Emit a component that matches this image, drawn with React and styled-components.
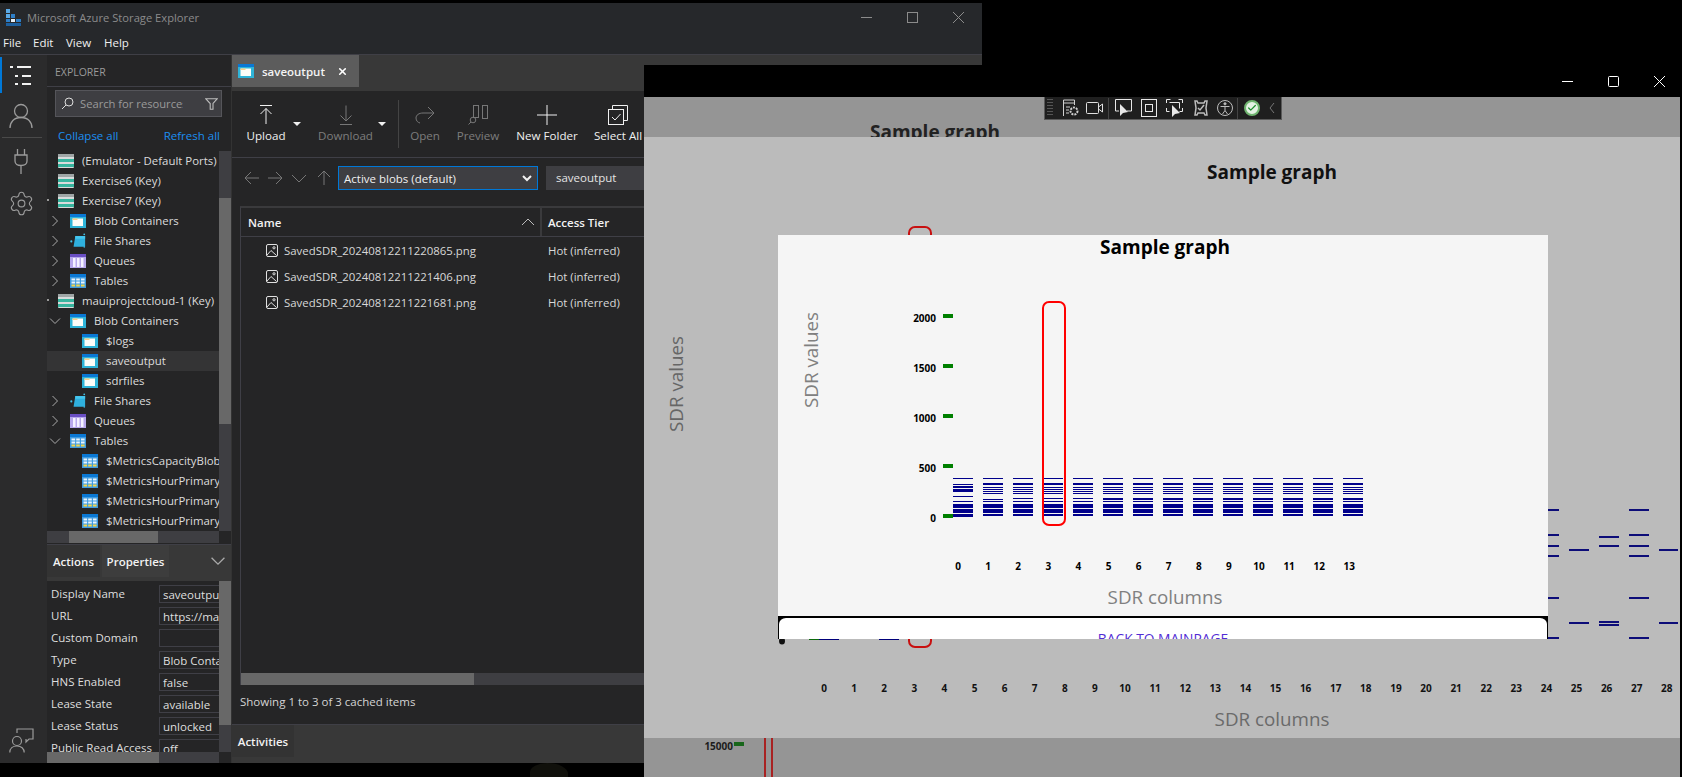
import React from 'react';
import styled, { createGlobalStyle } from 'styled-components';
import { Settings, X, Check } from 'lucide-react';

const GlobalStyle = createGlobalStyle`
  html, body { margin: 0; padding: 0; background: #000; overflow: hidden; }
  * { box-sizing: border-box; }
`;

const UI_FONT = '"Open Sans", "Noto Sans", "Liberation Sans", sans-serif';

const Desktop = styled.div`
  position: relative;
  width: 1682px;
  height: 777px;
  background: #000;
  overflow: hidden;
  font-family: ${UI_FONT};
`;

const GroundPatch = styled.div`
  position: absolute;
  left: 530px;
  top: 763px;
  width: 38px;
  height: 20px;
  border-radius: 50% 60% 0 0;
  background: #10100b;
`;

/* ---------- explorer window ---------- */
const ExplorerWindow = styled.div`
  position: absolute;
  left: 0;
  top: 3px;
  width: 982px;
  height: 760px;
  display: flex;
  flex-direction: column;
  background: #252526;
  color: #e4e4e4;
  font-size: 11.5px;
  overflow: hidden;
`;

const TitleBar = styled.div`
  height: 29px;
  flex: none;
  display: flex;
  align-items: center;
  padding-left: 6px;
  padding-right: 1px;
  background: #26282b;
  color: #8b8b8b;
  font-size: 11.2px;
`;

const TitleText = styled.span`
  margin-left: 6px;
`;

const TitleSpacer = styled.div`
  flex: 1;
`;

const WinButton = styled.div`
  width: 46px;
  height: 24px;
  display: flex;
  align-items: center;
  justify-content: center;
  color: #8b8b8b;
`;

const MenuBar = styled.div`
  height: 23px;
  flex: none;
  display: flex;
  align-items: flex-start;
  padding: 3px 0 0 3px;
  background: #26282b;
  border-bottom: 1px solid #3f3f46;
  color: #f0f0f0;
  font-size: 11.5px;
`;

const MenuItem = styled.span`
  width: ${(p) => p.$w}px;
`;

const Body = styled.div`
  flex: 1;
  display: flex;
  min-height: 0;
`;

const ActivityBar = styled.div`
  width: 47px;
  flex: none;
  display: flex;
  flex-direction: column;
  align-items: center;
  background: #2b2b2c;
  position: relative;
  padding-right: 5px;
  color: #9b9b9b;
`;

const ActivityIndicator = styled.div`
  position: absolute;
  left: 0;
  top: 2px;
  width: 2px;
  height: 36px;
  background: #0078d7;
`;

const ActivityButton = styled.div`
  height: ${(p) => p.$h}px;
  flex: none;
  display: flex;
  align-items: center;
  justify-content: center;
  color: ${(p) => p.$color || '#9b9b9b'};
`;

const ActivityDivider = styled.div`
  width: 40px;
  height: 1px;
  margin: 2px 0 0 1px;
  background: #4a4a4a;
`;

const ActivitySpacer = styled.div`
  flex: 1;
`;

const Sidebar = styled.div`
  width: 185px;
  flex: none;
  display: flex;
  flex-direction: column;
  border-right: 1px solid #333;
`;

const SideHeader = styled.div`
  height: 32px;
  flex: none;
  padding: 10px 0 0 8px;
  border-bottom: 1px solid #3f3f46;
  font-size: 10.5px;
  color: #9a9a9a;
`;

const SearchBox = styled.div`
  height: 27px;
  flex: none;
  margin: 3px 9px 0 8px;
  display: flex;
  align-items: center;
  background: #3e3e42;
  border: 1px solid #55555a;
  color: #9a9a9a;
  padding: 0 3px 0 5px;
`;

const SearchText = styled.div`
  width: 103px;
  margin-left: 6px;
  white-space: nowrap;
  overflow: hidden;
  font-size: 11.2px;
`;

const SearchFilter = styled.div`
  margin-left: auto;
  display: flex;
`;

const LinkRow = styled.div`
  height: 34px;
  flex: none;
  display: flex;
  justify-content: space-between;
  padding: 11px 11px 0 11px;
  color: #1c8ef0;
  font-size: 11.5px;
`;

const ScrollPane = styled.div`
  height: ${(p) => p.$h}px;
  flex: none;
  display: flex;
`;

const TreeList = styled.div`
  width: 172px;
  flex: none;
  overflow: hidden;
`;

const TreeRow = styled.div`
  height: 20px;
  display: flex;
  align-items: center;
  position: relative;
  padding-left: ${(p) => p.$indent}px;
  padding-bottom: 1px;
  gap: 8px;
  white-space: nowrap;
  color: #dcdcdc;
  font-size: 11.4px;
  background: ${(p) => (p.$selected ? '#343435' : 'transparent')};

  & > svg {
    flex: none;
  }
`;

const Twisty = styled.span`
  position: absolute;
  left: 1px;
  top: 3px;
  width: 14px;
  height: 14px;
  display: flex;
  color: #aaa;
`;

const AccountTick = styled.span`
  position: absolute;
  left: 0;
  top: 8px;
  width: 2px;
  height: 2px;
  background: #999;
`;

const VTrack = styled.div`
  width: 12px;
  flex: none;
  background: #3e3e42;
  overflow: hidden;
`;

const VThumb = styled.div`
  margin-top: ${(p) => p.$top}px;
  height: ${(p) => p.$size}px;
  background: #686868;
`;

const HScrollRow = styled.div`
  height: ${(p) => p.$h}px;
  flex: none;
  display: flex;
`;

const HTrack = styled.div`
  flex: ${(p) => (p.$w ? 'none' : 1)};
  width: ${(p) => (p.$w ? `${p.$w}px` : 'auto')};
  height: 100%;
  background: #3e3e42;
  display: flex;
`;

const HThumb = styled.div`
  margin-left: ${(p) => p.$left}px;
  width: ${(p) => p.$size}px;
  background: #686868;
`;

const PanelTabs = styled.div`
  height: 37px;
  flex: none;
  margin-top: 1px;
  border-top: 1px solid #3f3f46;
  background: #383838;
  display: flex;
  align-items: flex-start;
  font-weight: 600;
  color: #f2f2f2;
  font-size: 11.5px;
`;

const PanelTab = styled.div`
  width: ${(p) => p.$w}px;
  height: 32px;
  display: flex;
  align-items: center;
  justify-content: center;
  margin-right: ${(p) => p.$mr || 0}px;
  background: ${(p) => (p.$active ? '#3d3d3d' : '#333333')};
`;

const PanelChevron = styled.div`
  margin-left: auto;
  margin-right: 4px;
  height: 32px;
  display: flex;
  align-items: center;
  color: #aaa;
`;

const PropList = styled.div`
  width: 172px;
  flex: none;
  padding-top: 4px;
  overflow: hidden;
`;

const PropRow = styled.div`
  display: flex;
  align-items: center;
  height: 18px;
  margin-bottom: 4px;
  padding-left: 4px;
  white-space: nowrap;
  font-size: 11.5px;
  color: #dfdfdf;
`;

const PropLabel = styled.div`
  width: 108px;
  flex: none;
  margin-top: -2px;
`;

const PropValue = styled.div`
  width: 80px;
  height: 18px;
  flex: none;
  padding: 0 0 0 3px;
  line-height: 17px;
  border: 1px solid #3f3f46;
`;

const Main = styled.div`
  flex: 1;
  min-width: 0;
  display: flex;
  flex-direction: column;
`;

const TabBar = styled.div`
  height: 36px;
  flex: none;
  background: #383838;
`;

const DocTab = styled.div`
  width: 127px;
  height: 32px;
  display: flex;
  align-items: center;
  padding-left: 6px;
  gap: 8px;
  background: #5c5c5c;
  color: #f4f4f4;
  font-weight: 600;
  font-size: 11.5px;
`;

const TabClose = styled.span`
  display: flex;
  margin-left: auto;
  margin-right: 11px;
  color: #fff;
`;

const Toolbar = styled.div`
  height: 67px;
  flex: none;
  display: flex;
  align-items: flex-start;
  padding: 13px 0 0 8px;
  border-bottom: 1px solid #3f3f46;
  white-space: nowrap;
`;

const ToolButton = styled.div`
  width: ${(p) => p.$w}px;
  margin-left: ${(p) => p.$ml || 0}px;
  flex: none;
  display: flex;
  flex-direction: column;
  align-items: center;
  gap: 2px;
  font-size: 11.6px;
  color: ${(p) => (p.$dim ? '#7d7d7d' : '#f0f0f0')};
`;

const ToolIcon = styled.div`
  height: 22px;
  display: flex;
  align-items: center;
`;

const Caret = styled.div`
  width: 0;
  height: 0;
  flex: none;
  margin: 18px 0 0 ${(p) => p.$ml}px;
  border-left: 4px solid transparent;
  border-right: 4px solid transparent;
  border-top: 4px solid #f0f0f0;
`;

const ToolSeparator = styled.div`
  width: 1px;
  height: 48px;
  flex: none;
  margin: -4px 0 0 ${(p) => p.$ml}px;
  background: #444;
`;

const NavRow = styled.div`
  height: 48px;
  flex: none;
  display: flex;
  align-items: flex-start;
  padding: 8px 0 0 12px;
`;

const NavButton = styled.div`
  width: ${(p) => p.$w}px;
  height: 24px;
  flex: none;
  display: flex;
  align-items: center;
  color: #777;
`;

const FilterSelect = styled.div`
  width: 200px;
  height: 24px;
  flex: none;
  display: flex;
  align-items: center;
  justify-content: space-between;
  padding: 0 5px;
  background: #3e3e42;
  border: 1px solid #0078d7;
  color: #f0f0f0;
  font-size: 11.5px;
`;

const PathBox = styled.div`
  width: 300px;
  height: 24px;
  flex: none;
  margin-left: 8px;
  padding: 0 10px;
  line-height: 23px;
  background: #3e3e42;
  color: #e4e4e4;
  font-size: 11.5px;
`;

const BlobTable = styled.div`
  margin-left: 8px;
  flex: 1;
  min-height: 0;
  display: flex;
  flex-direction: column;
  border-left: 1px solid #3f3f46;
  border-top: 2px solid #3a3a3c;
`;

const TableHead = styled.div`
  height: 29px;
  flex: none;
  display: flex;
  align-items: center;
  border-bottom: 1px solid #3f3f46;
  font-weight: 600;
  font-size: 11.5px;
  color: #f2f2f2;
`;

const NameHead = styled.div`
  width: 301px;
  height: 100%;
  flex: none;
  display: flex;
  align-items: center;
  justify-content: space-between;
  padding: 0 5px 0 7px;
  border-right: 2px solid #3a3a3c;
`;

const TierHead = styled.div`
  padding-left: 6px;
`;

const TableRows = styled.div`
  flex: 1;
`;

const BlobRow = styled.div`
  height: 26px;
  display: flex;
  align-items: center;
  font-size: 11.4px;
  color: #d8d8d8;
`;

const BlobName = styled.div`
  width: 301px;
  flex: none;
  display: flex;
  align-items: center;
  gap: 6px;
  padding-left: 25px;
`;

const BlobTier = styled.div`
  padding-left: 6px;
`;

const StatusLine = styled.div`
  height: 39px;
  flex: none;
  padding: 9px 0 0 8px;
  font-size: 11.5px;
  color: #d4d4d4;
`;

const ActivityTabs = styled.div`
  height: 39px;
  flex: none;
  border-top: 1px solid #3f3f46;
  background: #383838;
  font-weight: 600;
  font-size: 11.5px;
  color: #f2f2f2;
`;

const ActivityTab = styled.div`
  width: 62px;
  height: 32px;
  display: flex;
  align-items: center;
  justify-content: center;
  background: #333333;
`;

/* ---------- graph window ---------- */
const GraphWindow = styled.div`
  position: absolute;
  left: 644px;
  top: 65px;
  width: 1036px;
  height: 712px;
  display: flex;
  flex-direction: column;
`;

const GraphTitleBar = styled.div`
  height: 32px;
  flex: none;
  display: flex;
  justify-content: flex-end;
  align-items: center;
  margin-right: -2px;
  background: #000;
  color: #fff;
`;

const GraphControl = styled.div`
  width: 46px;
  height: 32px;
  display: flex;
  align-items: center;
  justify-content: center;
`;

const Stage = styled.div`
  flex: 1;
  position: relative;
  overflow: hidden;
  background: #959595;
`;

const BackHeading = styled.div`
  position: absolute;
  left: 226px;
  top: 22px;
  font-size: 19px;
  font-weight: 700;
  color: #222;
`;

const BackBand = styled.svg`
  position: absolute;
  left: 0;
  top: 641px;
  display: block;
`;

const MidPage = styled.div`
  position: absolute;
  left: 0;
  top: 40px;
  width: 1036px;
  height: 601px;
  background: #bbbbbb;
`;

const ChartSvg = styled.svg`
  display: block;
  flex: none;
`;

const ChartTitle = styled.text`
  font-family: ${UI_FONT};
  font-size: 19px;
  font-weight: 700;
  text-anchor: middle;
  fill: ${(p) => p.$fill};
`;

const AxisTitle = styled.text`
  font-family: ${UI_FONT};
  font-size: 18.8px;
  text-anchor: middle;
  fill: ${(p) => p.$fill};
`;

const TickLabel = styled.text`
  font-family: ${UI_FONT};
  font-size: 10px;
  font-weight: 700;
  text-anchor: ${(p) => p.$anchor || 'middle'};
  fill: ${(p) => p.$fill};
`;

const FrontPage = styled.div`
  position: absolute;
  left: 134px;
  top: 138px;
  width: 770px;
  height: 404px;
  display: flex;
  flex-direction: column;
  overflow: hidden;
  background: #f5f5f5;
`;

const ButtonSlot = styled.div`
  flex: 1;
  background: #000;
`;

const BackButton = styled.div`
  height: 40px;
  padding-top: 11px;
  text-align: center;
  border-top: 2px solid #000;
  border-left: 1.5px solid #000;
  border-right: 1.5px solid #000;
  border-radius: 8px 8px 0 0;
  background: #fff;
  color: #512bd4;
  font-size: 13.8px;
`;

const DebugToolbar = styled.div`
  position: absolute;
  left: 400px;
  top: 0;
  width: 238px;
  height: 23px;
  display: flex;
  align-items: center;
  background: #1f1f1f;
  border: 1px solid #5a5a5a;
  border-top: none;
  color: #d5d5d5;
`;

const DebugGrip = styled.div`
  width: 6px;
  height: 18px;
  margin: 0 7px 0 2px;
  flex: none;
  background: repeating-linear-gradient(#555 0 1px, transparent 1px 3px);
`;

const DebugSlot = styled.div`
  width: ${(p) => p.$w}px;
  flex: none;
  display: flex;
  justify-content: center;
  align-items: center;
`;

const DebugDivider = styled.div`
  width: 1px;
  height: 21px;
  flex: none;
  background: #444;
`;

const OkBadge = styled.div`
  width: 16px;
  height: 16px;
  border-radius: 50%;
  display: flex;
  align-items: center;
  justify-content: center;
  background: #e4f2e4;
  border: 2px solid #6fb56f;
  color: #1d8f2e;
`;

/* ---------- small drawings ---------- */
const BlobIcon = () => (
  <svg width="16" height="14" viewBox="0 0 16 14">
    <rect width="16" height="14" fill="#2fb4d8" />
    <rect width="16" height="3" fill="#0a78d4" />
    <rect x="2.5" y="4.5" width="10.5" height="7.5" fill="#fdfdf8" />
    <rect x="2.5" y="4.5" width="5" height="1.5" fill="#f7cf86" />
  </svg>
);

const AccountIcon = () => (
  <svg width="16" height="14" viewBox="0 0 16 14">
    <rect width="16" height="14" rx="1" fill="#d8dcdc" />
    <rect y="0" width="16" height="3" fill="#9fa6a6" />
    <rect y="5" width="16" height="3" fill="#37b59f" />
    <rect y="10" width="16" height="3" fill="#37b59f" />
  </svg>
);

const ShareIcon = () => (
  <svg width="16" height="15" viewBox="0 0 18 16">
    <path d="M6 3h11v12H4z" fill="#2fb0de" />
    <rect x="6" y="3" width="11" height="3" fill="#45c6ee" />
    <circle cx="1.5" cy="9" r="1.2" fill="#45c6ee" />
    <circle cx="16" cy="1" r="1" fill="#45c6ee" />
    <circle cx="16" cy="15.4" r="0.8" fill="#45c6ee" />
  </svg>
);

const QueueIcon = () => (
  <svg width="16" height="14" viewBox="0 0 16 14">
    <rect width="16" height="14" fill="#b7a8ec" />
    <rect width="16" height="3" fill="#6a4fc4" />
    <rect x="3" y="4" width="2.5" height="9" fill="#f4f1ff" />
    <rect x="7" y="4" width="2.5" height="9" fill="#f4f1ff" />
    <rect x="11" y="4" width="2.5" height="9" fill="#f4f1ff" />
  </svg>
);

const TableIcon = () => (
  <svg width="16" height="14" viewBox="0 0 16 14">
    <rect width="16" height="14" fill="#3f9be0" />
    <rect width="16" height="3" fill="#0a78d4" />
    <g fill="#e8f3fb">
      <rect x="1.5" y="4.5" width="3.6" height="2" />
      <rect x="6.2" y="4.5" width="3.6" height="2" />
      <rect x="11" y="4.5" width="3.6" height="2" />
      <rect x="1.5" y="7.5" width="3.6" height="2" />
      <rect x="6.2" y="7.5" width="3.6" height="2" />
      <rect x="11" y="7.5" width="3.6" height="2" />
    </g>
    <g fill="#f2d64b">
      <rect x="1.5" y="10.5" width="3.6" height="2" />
      <rect x="6.2" y="10.5" width="3.6" height="2" />
      <rect x="11" y="10.5" width="3.6" height="2" />
    </g>
  </svg>
);

const AppLogo = () => (
  <svg width="15" height="17" viewBox="0 0 15 17">
    <rect x="0" y="0" width="4" height="4" fill="#5aa9e6" />
    <rect x="0" y="5" width="4" height="4" fill="#5aa9e6" />
    <rect x="5" y="5" width="4" height="4" fill="#2f7fc7" />
    <rect x="5" y="10" width="4" height="3" fill="#e6eef5" />
    <rect x="0" y="10" width="4" height="3" fill="#2f7fc7" />
    <rect x="10" y="10" width="5" height="3" fill="#2f7fc7" />
    <rect x="0" y="14" width="15" height="3" fill="#1d5f9e" />
  </svg>
);

const Chevron = ({ open, size = 14 }) => (
  <svg width={size} height={size} viewBox="0 0 14 14" fill="none" stroke="currentColor" strokeWidth="1">
    <path d={open ? 'M2 4.5l5 5 5-5' : 'M4.5 2l5 5-5 5'} />
  </svg>
);

const PictureIcon = () => (
  <svg width="12" height="13" viewBox="0 0 12 13" fill="none" stroke="#e0e0e0" strokeWidth="1">
    <rect x="0.5" y="0.5" width="11" height="12" rx="1.5" />
    <path d="M1 11l4-4.5 5.5 5" />
    <circle cx="8" cy="3.8" r="1.1" />
  </svg>
);

const ListGlyph = () => (
  <svg width="22" height="22" viewBox="0 0 22 22" fill="#f2f2f2">
    <rect x="0" y="1" width="3" height="2" />
    <rect x="7" y="1" width="14" height="2" />
    <rect x="5" y="10" width="3" height="2" />
    <rect x="12" y="10" width="9" height="2" />
    <rect x="5" y="18" width="3" height="2" />
    <rect x="12" y="18" width="9" height="2" />
  </svg>
);

const PersonGlyph = () => (
  <svg width="24" height="26" viewBox="0 0 24 26" fill="none" stroke="currentColor" strokeWidth="1.3">
    <circle cx="12" cy="8" r="6.5" />
    <path d="M1 25c0-6 4-10.5 11-10.5S23 19 23 25" />
  </svg>
);

const PlugGlyph = () => (
  <svg width="14" height="25" viewBox="0 0 14 25" fill="none" stroke="currentColor" strokeWidth="1.3">
    <path d="M3.5 0v6M10.5 0v6M1 6h12v6c0 3-2.5 4.5-6 4.5S1 15 1 12zM7 16.5V25" />
  </svg>
);

const FeedbackGlyph = () => (
  <svg width="25" height="25" viewBox="0 0 25 25" fill="none" stroke="currentColor" strokeWidth="1.2">
    <circle cx="8" cy="13" r="4.5" />
    <path d="M0.8 24.5c0-4 3-6.5 7.2-6.5s7.2 2.5 7.2 6.5" />
    <path d="M8 5V1h16v10h-4l-3 3v-3" />
  </svg>
);

const SearchGlyph = () => (
  <svg width="13" height="13" viewBox="0 0 13 13" fill="none" stroke="#ddd" strokeWidth="1">
    <circle cx="8" cy="5" r="4" />
    <path d="M5 8l-4 4" />
  </svg>
);

const FilterGlyph = () => (
  <svg width="13" height="12" viewBox="0 0 13 12" fill="none" stroke="#bdbdbd" strokeWidth="1.1">
    <path d="M.7.7h11.6L8 5.5v5.8H5.2V5.5z" />
  </svg>
);

const UploadGlyph = () => (
  <svg width="14" height="20" viewBox="0 0 14 20" fill="none" stroke="#f0f0f0" strokeWidth="1">
    <path d="M1 .5h12M7 19V3.5M1.5 9L7 3.5 12.5 9" />
  </svg>
);

const DownloadGlyph = () => (
  <svg width="14" height="20" viewBox="0 0 14 20" fill="none" stroke="#777" strokeWidth="1">
    <path d="M1 19.5h12M7 .5V16M1.5 10.5L7 16l5.5-5.5" />
  </svg>
);

const OpenGlyph = () => (
  <svg width="20" height="18" viewBox="0 0 20 18" fill="none" stroke="#777" strokeWidth="1">
    <path d="M19 7H8c-4 0-7 2-7 5s2 4.5 4 5M13 1l6 6-6 6" />
  </svg>
);

const PreviewGlyph = () => (
  <svg width="21" height="20" viewBox="0 0 21 20" fill="none" stroke="#777" strokeWidth="1">
    <rect x="5.5" y="0.5" width="5" height="12" />
    <rect x="14.5" y="0.5" width="5" height="13" />
    <circle cx="5" cy="15" r="2.8" />
    <path d="M3 17l-2.5 2.5" />
  </svg>
);

const PlusGlyph = () => (
  <svg width="20" height="20" viewBox="0 0 20 20" stroke="#f0f0f0" strokeWidth="1">
    <path d="M0 10h20M10 0v20" />
  </svg>
);

const SelectAllGlyph = () => (
  <svg width="20" height="20" viewBox="0 0 20 20" fill="none" stroke="#f0f0f0" strokeWidth="1">
    <path d="M4.5 5V.5h15v15H15" />
    <rect x="0.5" y="4.5" width="15" height="15" />
    <path d="M4 12l3 3 5.5-6" />
  </svg>
);

const Arrow = ({ d }) => (
  <svg width="16" height="16" viewBox="0 0 16 16" fill="none" stroke="currentColor" strokeWidth="1">
    <path d={d} />
  </svg>
);

/* ---------- data ---------- */
const treeRows = [
  { label: '(Emulator - Default Ports)', kind: 'account' },
  { label: 'Exercise6 (Key)', kind: 'account' },
  { label: 'Exercise7 (Key)', kind: 'account', tick: true },
  { label: 'Blob Containers', kind: 'blob', level: 1 },
  { label: 'File Shares', kind: 'share', level: 1 },
  { label: 'Queues', kind: 'queue', level: 1 },
  { label: 'Tables', kind: 'table', level: 1 },
  { label: 'mauiprojectcloud-1 (Key)', kind: 'account', tick: true },
  { label: 'Blob Containers', kind: 'blob', level: 1, open: true },
  { label: '$logs', kind: 'blob', level: 2 },
  { label: 'saveoutput', kind: 'blob', level: 2, selected: true },
  { label: 'sdrfiles', kind: 'blob', level: 2 },
  { label: 'File Shares', kind: 'share', level: 1 },
  { label: 'Queues', kind: 'queue', level: 1 },
  { label: 'Tables', kind: 'table', level: 1, open: true },
  { label: '$MetricsCapacityBlob', kind: 'table', level: 2 },
  { label: '$MetricsHourPrimaryTransactionsBlob', kind: 'table', level: 2 },
  { label: '$MetricsHourPrimaryTransactionsQueue', kind: 'table', level: 2 },
  { label: '$MetricsHourPrimaryTransactionsTable', kind: 'table', level: 2 },
];

const treeIcons = { account: AccountIcon, blob: BlobIcon, share: ShareIcon, queue: QueueIcon, table: TableIcon };
const treeIndent = [11, 23, 35];

const properties = [
  ['Display Name', 'saveoutput'],
  ['URL', 'https://mauiprojectcloud'],
  ['Custom Domain', ''],
  ['Type', 'Blob Container'],
  ['HNS Enabled', 'false'],
  ['Lease State', 'available'],
  ['Lease Status', 'unlocked'],
  ['Public Read Access', 'off'],
];

const blobs = ['SavedSDR_20240812211220865.png', 'SavedSDR_20240812211221406.png', 'SavedSDR_20240812211221681.png'];

const firstColumn = [[478, 1], [484, 1], [486, 2], [489, 3], [496, 1], [501, 1], [504, 4], [509, 4], [514, 3]];
const earlyColumn = [[478, 1], [483, 2], [487, 1], [489, 1], [491, 1], [493, 1], [499, 1], [501, 1], [504, 4], [509, 4], [514, 2]];
const midColumn = [[478, 1], [483, 2], [487, 1], [489, 1], [491, 1], [493, 1], [498, 1], [501, 1], [504, 4], [509, 4], [514, 2]];
const lateColumn = [[478, 1], [483, 2], [487, 1], [489, 1], [491, 1], [493, 1], [498, 2], [501, 1], [504, 4], [509, 4], [514, 2]];

const columnBands = (i) => {
  if (i === 0) return firstColumn;
  if (i === 1) return earlyColumn;
  if (i < 5) return midColumn;
  return lateColumn;
};

const frontTicks = [['2000', 318], ['1500', 368], ['1000', 418], ['500', 468], ['0', 518]];

const backColumns = [
  { x: 1548, w: 11, ys: [509, 534, 545, 555, 597, 637] },
  { x: 1569, w: 20, ys: [549, 622] },
  { x: 1599, w: 20, ys: [536, 545, 621, 624] },
  { x: 1629, w: 20, ys: [509, 534, 545, 555, 597, 637] },
  { x: 1659, w: 19, ys: [549, 622] },
];

const FrontChart = () => (
  <ChartSvg width="770" height="381" viewBox="778 235 770 381">
    <ChartTitle x="1165" y="254" $fill="#000">Sample graph</ChartTitle>
    <AxisTitle x="818" y="360" $fill="#808080" transform="rotate(-90 818 360)">SDR values</AxisTitle>
    {frontTicks.map(([label, y]) => (
      <g key={label}>
        <TickLabel x="936" y={y + 4} $anchor="end" $fill="#000">{label}</TickLabel>
        <rect x="943" y={y - 4} width="10" height="4" fill="#008000" />
      </g>
    ))}
    {Array.from({ length: 14 }, (_, i) => (
      <g key={i}>
        {columnBands(i).map(([y, h]) => (
          <rect key={y} x={953 + i * 30} y={y} width="20" height={h} fill="#00008b" />
        ))}
        <TickLabel x={958 + i * 30.1} y="570" $fill="#000">{i}</TickLabel>
      </g>
    ))}
    <rect x="1043" y="302" width="22" height="223" rx="6" fill="none" stroke="#f00" strokeWidth="2" />
    <AxisTitle x="1165" y="604" $fill="#808080">SDR columns</AxisTitle>
  </ChartSvg>
);

const MidChart = () => (
  <ChartSvg width="1036" height="601" viewBox="644 137 1036 601">
    <ChartTitle x="1272" y="179" $fill="#111">Sample graph</ChartTitle>
    <AxisTitle x="683" y="384" $fill="#666" transform="rotate(-90 683 384)">SDR values</AxisTitle>
    <rect x="909" y="227" width="22" height="420" rx="6" fill="none" stroke="#c81010" strokeWidth="2" />
    <ellipse cx="782" cy="641" rx="3" ry="3.5" fill="#111" />
    <rect x="809" y="639" width="10" height="1" fill="#0c6a0c" />
    <rect x="819" y="639" width="20" height="1" fill="#00007a" />
    <rect x="879" y="639" width="20" height="1" fill="#00007a" />
    {backColumns.map((c) => c.ys.map((y) => (
      <rect key={`${c.x}-${y}`} x={c.x} y={y} width={c.w} height="2" fill="#0c0c78" />
    )))}
    {Array.from({ length: 29 }, (_, i) => (
      <TickLabel key={i} x={824 + i * 30.1} y="692" $fill="#111">{i}</TickLabel>
    ))}
    <AxisTitle x="1272" y="726" $fill="#6a6a6a">SDR columns</AxisTitle>
  </ChartSvg>
);

const App = () => (
  <Desktop>
    <GlobalStyle />
    <GroundPatch />
    <ExplorerWindow>
      <TitleBar>
        <AppLogo />
        <TitleText>Microsoft Azure Storage Explorer</TitleText>
        <TitleSpacer />
        <WinButton>
          <svg width="11" height="11" stroke="currentColor"><path d="M0 5.5h11" /></svg>
        </WinButton>
        <WinButton>
          <svg width="11" height="11" fill="none" stroke="currentColor"><rect x="0.5" y="0.5" width="10" height="10" /></svg>
        </WinButton>
        <WinButton>
          <svg width="11" height="11" stroke="currentColor"><path d="M0 0l11 11M11 0L0 11" /></svg>
        </WinButton>
      </TitleBar>
      <MenuBar>
        <MenuItem $w={30}>File</MenuItem>
        <MenuItem $w={33}>Edit</MenuItem>
        <MenuItem $w={38}>View</MenuItem>
        <MenuItem $w={30}>Help</MenuItem>
      </MenuBar>
      <Body>
        <ActivityBar>
          <ActivityIndicator />
          <ActivityButton $h={42} $color="#f2f2f2"><ListGlyph /></ActivityButton>
          <ActivityButton $h={38}><PersonGlyph /></ActivityButton>
          <ActivityDivider />
          <ActivityButton $h={46}><PlugGlyph /></ActivityButton>
          <ActivityButton $h={38}><Settings size={27} strokeWidth={1} /></ActivityButton>
          <ActivitySpacer />
          <ActivityButton $h={46}><FeedbackGlyph /></ActivityButton>
        </ActivityBar>
        <Sidebar>
          <SideHeader>EXPLORER</SideHeader>
          <SearchBox>
            <SearchGlyph />
            <SearchText>Search for resources</SearchText>
            <SearchFilter><FilterGlyph /></SearchFilter>
          </SearchBox>
          <LinkRow>
            <span>Collapse all</span>
            <span>Refresh all</span>
          </LinkRow>
          <ScrollPane $h={380}>
            <TreeList>
              {treeRows.map((row, i) => {
                const Icon = treeIcons[row.kind];
                const level = row.level || 0;
                return (
                  <TreeRow key={i} $indent={treeIndent[level]} $selected={row.selected}>
                    {row.tick && <AccountTick />}
                    {level === 1 && <Twisty><Chevron open={row.open} /></Twisty>}
                    <Icon />
                    <span>{row.label}</span>
                  </TreeRow>
                );
              })}
            </TreeList>
            <VTrack><VThumb $top={47} $size={226} /></VTrack>
          </ScrollPane>
          <HScrollRow $h={12}>
            <HTrack $w={172}><HThumb $left={22} $size={89} /></HTrack>
          </HScrollRow>
          <PanelTabs>
            <PanelTab $w={53} $mr={2}>Actions</PanelTab>
            <PanelTab $w={67} $active>Properties</PanelTab>
            <PanelChevron><Chevron open size={18} /></PanelChevron>
          </PanelTabs>
          <ScrollPane $h={171}>
            <PropList>
              {properties.map(([name, value]) => (
                <PropRow key={name}>
                  <PropLabel>{name}</PropLabel>
                  <PropValue>{value}</PropValue>
                </PropRow>
              ))}
            </PropList>
            <VTrack><VThumb $top={0} $size={144} /></VTrack>
          </ScrollPane>
          <HScrollRow $h={11}>
            <HTrack $w={172}><HThumb $left={0} $size={112} /></HTrack>
          </HScrollRow>
        </Sidebar>
        <Main>
          <TabBar>
            <DocTab>
              <BlobIcon />
              <span>saveoutput</span>
              <TabClose><X size={11} strokeWidth={3.5} /></TabClose>
            </DocTab>
          </TabBar>
          <Toolbar>
            <ToolButton $w={52}><ToolIcon><UploadGlyph /></ToolIcon>Upload</ToolButton>
            <Caret $ml={1} />
            <ToolButton $w={53} $ml={18} $dim><ToolIcon><DownloadGlyph /></ToolIcon>Download</ToolButton>
            <Caret $ml={6} />
            <ToolSeparator $ml={12} />
            <ToolButton $w={30} $ml={11} $dim><ToolIcon><OpenGlyph /></ToolIcon>Open</ToolButton>
            <ToolButton $w={40} $ml={18} $dim><ToolIcon><PreviewGlyph /></ToolIcon>Preview</ToolButton>
            <ToolButton $w={60} $ml={19}><ToolIcon><PlusGlyph /></ToolIcon>New Folder</ToolButton>
            <ToolButton $w={50} $ml={16}><ToolIcon><SelectAllGlyph /></ToolIcon>Select All</ToolButton>
          </Toolbar>
          <NavRow>
            <NavButton $w={23}><Arrow d="M15 8H1M7 2L1 8l6 6" /></NavButton>
            <NavButton $w={24}><Arrow d="M1 8h14M9 2l6 6-6 6" /></NavButton>
            <NavButton $w={25}><Arrow d="M1 5l7 7 7-7" /></NavButton>
            <NavButton $w={22}><Arrow d="M8 15V1M2 7l6-6 6 6" /></NavButton>
            <FilterSelect>
              <span>Active blobs (default)</span>
              <svg width="10" height="7" viewBox="0 0 10 7" fill="none" stroke="#f0f0f0" strokeWidth="2"><path d="M1 1l4 4 4-4" /></svg>
            </FilterSelect>
            <PathBox>saveoutput</PathBox>
          </NavRow>
          <BlobTable>
            <TableHead>
              <NameHead>
                <span>Name</span>
                <svg width="14" height="8" viewBox="0 0 14 8" fill="none" stroke="#bbb"><path d="M1 7l6-6 6 6" /></svg>
              </NameHead>
              <TierHead>Access Tier</TierHead>
            </TableHead>
            <TableRows>
              {blobs.map((name) => (
                <BlobRow key={name}>
                  <BlobName><PictureIcon /><span>{name}</span></BlobName>
                  <BlobTier>Hot (inferred)</BlobTier>
                </BlobRow>
              ))}
            </TableRows>
            <HScrollRow $h={12}>
              <HTrack><HThumb $left={0} $size={233} /></HTrack>
            </HScrollRow>
          </BlobTable>
          <StatusLine>Showing 1 to 3 of 3 cached items</StatusLine>
          <ActivityTabs><ActivityTab>Activities</ActivityTab></ActivityTabs>
        </Main>
      </Body>
    </ExplorerWindow>

    <GraphWindow>
      <GraphTitleBar>
        <GraphControl>
          <svg width="11" height="11" stroke="#fff"><path d="M0 5.5h11" /></svg>
        </GraphControl>
        <GraphControl>
          <svg width="11" height="11" fill="none" stroke="#fff"><rect x="0.5" y="0.5" width="10" height="10" rx="1" /></svg>
        </GraphControl>
        <GraphControl>
          <svg width="11" height="11" stroke="#fff"><path d="M0 0l11 11M11 0L0 11" /></svg>
        </GraphControl>
      </GraphTitleBar>
      <Stage>
        <BackHeading>Sample graph</BackHeading>
        <MidPage><MidChart /></MidPage>
        <BackBand width="1036" height="40" viewBox="644 738 1036 40">
          <TickLabel x="733" y="750" $anchor="end" $fill="#1c1c1c">15000</TickLabel>
          <rect x="734" y="742" width="10" height="4" fill="#17661a" />
          <rect x="764" y="738" width="2" height="40" fill="#a82222" />
          <rect x="771" y="738" width="2" height="40" fill="#a82222" />
        </BackBand>
        <FrontPage>
          <FrontChart />
          <ButtonSlot><BackButton>BACK TO MAINPAGE</BackButton></ButtonSlot>
        </FrontPage>
        <DebugToolbar>
          <DebugGrip />
          <DebugSlot $w={20}>
            <svg width="17" height="18" viewBox="0 0 17 18" fill="none" stroke="#cfcfcf">
              <path d="M1.5 17V1h11v5M1.5 4h11M4 8h4M4 11h3M4 14h3" />
              <circle cx="12" cy="12" r="3.5" strokeWidth="2" strokeDasharray="2 1" />
            </svg>
          </DebugSlot>
          <DebugSlot $w={28}>
            <svg width="17" height="12" viewBox="0 0 17 12" fill="none" stroke="#e0e0e0">
              <rect x="0.5" y="0.5" width="12" height="11" rx="1" />
              <path d="M12.5 5l4-3v8l-4-3" />
            </svg>
          </DebugSlot>
          <DebugDivider />
          <DebugSlot $w={29}>
            <svg width="17" height="18" viewBox="0 0 17 18" fill="none" stroke="#e8e8e8">
              <path d="M4 12H.5V.5h16V12H12" />
              <path d="M5 5l0 12 3-3 5-1z" fill="#e8e8e8" stroke="none" />
            </svg>
          </DebugSlot>
          <DebugSlot $w={22}>
            <svg width="16" height="18" viewBox="0 0 16 18" fill="none" stroke="#e8e8e8">
              <rect x="0.5" y="0.5" width="15" height="17" />
              <rect x="4.5" y="5.5" width="7" height="7" />
            </svg>
          </DebugSlot>
          <DebugSlot $w={29}>
            <svg width="17" height="18" viewBox="0 0 17 18" fill="none" stroke="#e8e8e8">
              <path d="M.5 4V.5h4M12.5.5h4V4M.5 9v3.5h3M16.5 9v3.5h-3M3.5 3.5h10v6" />
              <path d="M6 6l0 12 3-3 5-1z" fill="#e8e8e8" stroke="none" />
            </svg>
          </DebugSlot>
          <DebugSlot $w={24}>
            <svg width="16" height="18" viewBox="0 0 16 18" fill="none" stroke="#bdbdbd" strokeWidth="1.5">
              <path d="M2 2h2l1 2h6l1-2h2l-1 7 1 7h-2l-1-2H5l-1 2H2l1-7z" />
              <path d="M5 9l2 2 4-5" />
            </svg>
          </DebugSlot>
          <DebugSlot $w={24}>
            <svg width="16" height="18" viewBox="0 0 16 18" fill="none" stroke="#bdbdbd">
              <circle cx="8" cy="9" r="7.5" />
              <circle cx="8" cy="4.8" r="1.1" fill="#bdbdbd" />
              <path d="M3.5 7.5h9M8 7.5v4M8 11.5l-2.5 3.5M8 11.5l2.5 3.5" />
            </svg>
          </DebugSlot>
          <DebugDivider />
          <DebugSlot $w={27}>
            <OkBadge><Check size={10} strokeWidth={3} /></OkBadge>
          </DebugSlot>
          <DebugSlot $w={13}>
            <svg width="6" height="12" viewBox="0 0 6 12" fill="none" stroke="#777"><path d="M5 1L1 6l4 5" /></svg>
          </DebugSlot>
        </DebugToolbar>
      </Stage>
    </GraphWindow>
  </Desktop>
);

export default App;
